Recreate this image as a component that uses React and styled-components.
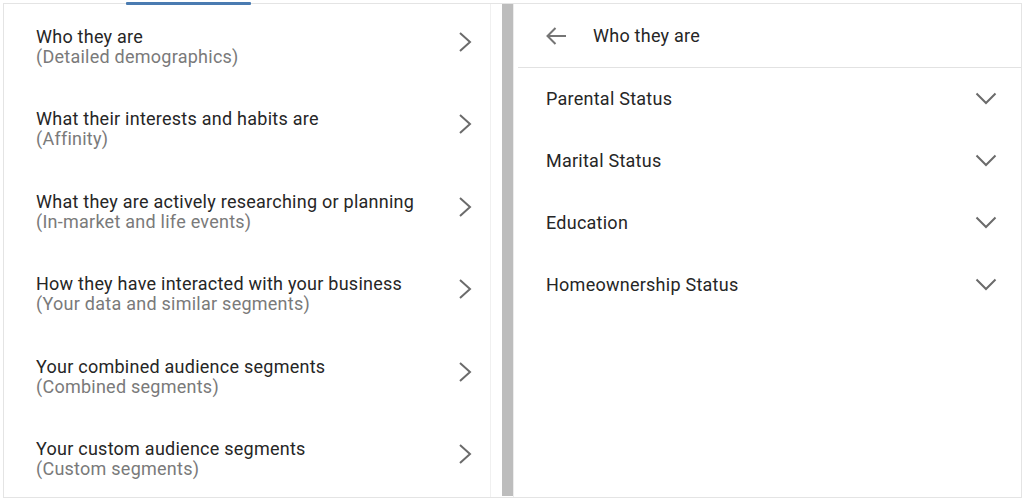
import React from "react";
import styled, { createGlobalStyle } from "styled-components";

const Global = createGlobalStyle`
  html, body { margin: 0; padding: 0; background: #fff; }
  body { font-family: Roboto, "Noto Sans", Arial, sans-serif; }
  * { box-sizing: border-box; }
`;

const Page = styled.div`
  width: 1024px;
  height: 502px;
  padding: 3px 2px 4px 3px;
  background: #fff;
`;

const Frame = styled.div`
  position: relative;
  height: 100%;
  border: 1px solid #e4e4e4;
  display: flex;
`;

const TabIndicator = styled.div`
  position: absolute;
  top: -2px;
  left: 122px;
  width: 125px;
  height: 3px;
  background: #4a7bb1;
  border-radius: 1px;
`;

const LeftPanel = styled.div`
  width: 487px;
  border-right: 1px solid #f0f0f0;
  padding-top: 2px;
  display: flex;
  flex-direction: column;
  overflow: hidden;
`;

const Gutter = styled.div`
  width: 22px;
  display: flex;
  justify-content: flex-end;
  padding-bottom: 1px;
`;

const Scrollbar = styled.div`
  width: 11px;
  height: 100%;
  background: #bdbdbd;
`;

const CategoryRow = styled.div`
  height: 82.4px;
  flex-shrink: 0;
  display: flex;
  align-items: flex-start;
  padding: 21px 18px 0 32px;
`;

const CategoryText = styled.div`
  flex: 1;
  display: flex;
  flex-direction: column;
`;

const Title = styled.span`
  font-size: 18px;
  line-height: 20px;
  color: #262626;
  letter-spacing: 0.25px;
`;

const Subtitle = styled.span`
  font-size: 18px;
  line-height: 20px;
  color: #7a7a7a;
  letter-spacing: 0.25px;
`;

const IconBox = styled.div`
  width: ${(p) => p.$w}px;
  height: ${(p) => p.$h}px;
  display: flex;
  align-items: center;
  justify-content: center;
  margin-top: ${(p) => p.$mt || 0}px;
  flex-shrink: 0;
`;

const RightPanel = styled.div`
  flex: 1;
  border-left: 1px solid #ececec;
  display: flex;
  flex-direction: column;
`;

const Header = styled.div`
  height: 64px;
  margin-left: 4px;
  border-bottom: 1px solid #e2e2e2;
  display: flex;
  align-items: center;
  padding: 0 0 0 27px;
  gap: 26px;
`;

const HeaderTitle = styled.span`
  font-size: 18px;
  color: #262626;
  letter-spacing: 0.25px;
`;

const FilterList = styled.div`
  display: flex;
  flex-direction: column;
`;

const FilterRow = styled.div`
  height: 62px;
  display: flex;
  align-items: center;
  padding: 0 24px 2px 32px;
`;

const FilterLabel = styled.span`
  flex: 1;
  font-size: 18px;
  color: #262626;
  letter-spacing: 0.25px;
`;

const ChevronRight = () => (
  <svg width="14" height="22" viewBox="0 0 14 22">
    <path d="M2 2 L12 11 L2 20" fill="none" stroke="#6b6b6b" strokeWidth="2" />
  </svg>
);

const ChevronDown = () => (
  <svg width="22" height="13" viewBox="0 0 22 13">
    <path d="M1.5 1.5 L11 11 L20.5 1.5" fill="none" stroke="#6b6b6b" strokeWidth="2" />
  </svg>
);

const BackArrow = () => (
  <svg width="22" height="20" viewBox="0 0 22 20">
    <path d="M21 10 H2.5 M10.5 2 L2.5 10 L10.5 18" fill="none" stroke="#757575" strokeWidth="2" />
  </svg>
);

const categories = [
  ["Who they are", "(Detailed demographics)"],
  ["What their interests and habits are", "(Affinity)"],
  ["What they are actively researching or planning", "(In-market and life events)"],
  ["How they have interacted with your business", "(Your data and similar segments)"],
  ["Your combined audience segments", "(Combined segments)"],
  ["Your custom audience segments", "(Custom segments)"],
];

const filters = ["Parental Status", "Marital Status", "Education", "Homeownership Status"];

export default function App() {
  return (
    <>
      <Global />
      <Page>
        <Frame>
          <TabIndicator />
          <LeftPanel>
            {categories.map(([t, s]) => (
              <CategoryRow key={t}>
                <CategoryText>
                  <Title>{t}</Title>
                  <Subtitle>{s}</Subtitle>
                </CategoryText>
                <IconBox $w={14} $h={22} $mt={4}>
                  <ChevronRight />
                </IconBox>
              </CategoryRow>
            ))}
          </LeftPanel>
          <Gutter>
            <Scrollbar />
          </Gutter>
          <RightPanel>
            <Header>
              <IconBox $w={22} $h={20}>
                <BackArrow />
              </IconBox>
              <HeaderTitle>Who they are</HeaderTitle>
            </Header>
            <FilterList>
              {filters.map((f) => (
                <FilterRow key={f}>
                  <FilterLabel>{f}</FilterLabel>
                  <IconBox $w={22} $h={13}>
                    <ChevronDown />
                  </IconBox>
                </FilterRow>
              ))}
            </FilterList>
          </RightPanel>
        </Frame>
      </Page>
    </>
  );
}
